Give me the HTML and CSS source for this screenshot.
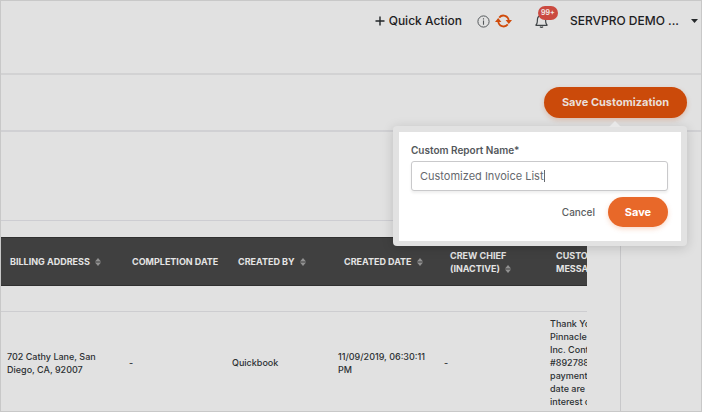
FILE: index.html
```html
<!DOCTYPE html>
<html lang="en">
<head>
<meta charset="utf-8">
<title>Invoice List</title>
<link rel="stylesheet" href="styles.css">
</head>
<body>
<div class="app">
  <header class="topbar">
    <button class="quick-action" type="button">
      <svg width="10" height="10" viewBox="0 0 10 10" aria-hidden="true"><path d="M5 .5v9M.5 5h9" stroke="#222628" stroke-width="1.4" fill="none"/></svg>
      <span>Quick Action</span>
    </button>
    <div class="status">
      <button class="icon-button" type="button" aria-label="Information">
        <svg width="13" height="13" viewBox="0 0 13 13" fill="none" stroke="#54585b"><circle cx="6.5" cy="6.5" r="5.6"/><path d="M6.5 5.5v4.2M6.5 3.2v1.2" stroke-width="1.1"/></svg>
      </button>
      <button class="icon-button" type="button" aria-label="Refresh">
        <svg width="17" height="14" viewBox="0 0 17 14" fill="none" stroke="#d04b0b" stroke-width="1.8"><path d="M4.200 3.600C7.200-.2 13.500 1.400 13.800 7M12.800 10.400C9.800 14.200 3.500 12.600 3.200 7"/><path d="M10.600 6h6.400l-3.200 4zM0 8h6.400L3.200 4z" fill="#d04b0b" stroke="none"/></svg>
      </button>
    </div>
    <button class="icon-button bell" type="button" aria-label="Notifications">
      <svg width="13" height="14" viewBox="0 0 13 14" fill="none" stroke="#3f4447" stroke-width="1.2"><path d="M.6 11.300h11.800c-1.500-.8-1.800-2-1.800-5.500 0-2.500-1.800-4.100-4.100-4.100S2.400 3.300 2.400 5.800c0 3.500-.3 4.700-1.800 5.500zM6.500 0v1.700M5 12.600c.7 1 2.300 1 3 0"/></svg>
      <span class="badge">99+</span>
    </button>
    <button class="account" type="button">
      <span>SERVPRO DEMO ...</span>
      <svg width="7" height="4" viewBox="0 0 7 4" aria-hidden="true"><path d="M0 0h7L3.500 4z" fill="#26292b"/></svg>
    </button>
  </header>

  <div class="toolbar">
    <div class="customize">
      <button class="primary" type="button">Save Customization</button>
      <form class="popover">
        <div class="panel">
          <label for="report-name">Custom Report Name*</label>
          <div class="field">
            <input id="report-name" type="text" value="Customized Invoice List">
            <span class="caret"></span>
          </div>
          <div class="actions">
            <button class="cancel" type="button">Cancel</button>
            <button class="save" type="button">Save</button>
          </div>
        </div>
      </form>
    </div>
  </div>

  <div class="content">
    <main class="report">
      <div class="filters"></div>
      <div class="table-wrap">
        <table>
          <colgroup><col class="c-address"><col class="c-completion"><col class="c-std"><col class="c-std"><col class="c-std"><col class="c-std"></colgroup>
          <thead>
            <tr>
              <th class="tight">BILLING ADDRESS <svg class="sort" viewBox="0 0 6 8"><path d="M0 3.500 3 0l3 3.500zM0 4.500h6L3 8z"/></svg></th>
              <th class="tight">COMPLETION DATE</th>
              <th>CREATED BY <svg class="sort" viewBox="0 0 6 8"><path d="M0 3.500 3 0l3 3.500zM0 4.500h6L3 8z"/></svg></th>
              <th>CREATED DATE <svg class="sort" viewBox="0 0 6 8"><path d="M0 3.500 3 0l3 3.500zM0 4.500h6L3 8z"/></svg></th>
              <th>CREW CHIEF<br>(INACTIVE) <svg class="sort" viewBox="0 0 6 8"><path d="M0 3.500 3 0l3 3.500zM0 4.500h6L3 8z"/></svg></th>
              <th>CUSTO<br>MESSA</th>
            </tr>
          </thead>
          <tbody>
            <tr class="spacer"><td colspan="6"></td></tr>
            <tr>
              <td>702 Cathy Lane, San<br>Diego, CA, 92007</td>
              <td>-</td>
              <td>Quickbook</td>
              <td>11/09/2019, 06:30:11<br>PM</td>
              <td>-</td>
              <td>Thank Yo<br>Pinnacle<br>Inc. Cont<br>#892788<br>payment<br>date are<br>interest o</td>
            </tr>
          </tbody>
        </table>
      </div>
    </main>
    <aside class="side"></aside>
  </div>
</div>
</body>
</html>
```
FILE: styles.css
```css
* { box-sizing: border-box; }

body {
  margin: 0;
  background: #e1e1e1;
  color: #2c3033;
  font-family: Inter, "Open Sans", sans-serif;
  font-size: 9px;
  line-height: 13px;
}

button {
  margin: 0;
  padding: 0;
  border: 0;
  background: none;
  color: inherit;
  font: inherit;
  white-space: nowrap;
}

svg { display: block; flex: none; }

.app {
  display: flex;
  flex-direction: column;
  height: 100vh;
  overflow: hidden;
  border: 1px solid #c8c8c8;
}

.topbar {
  display: flex;
  flex: none;
  align-items: flex-start;
  justify-content: flex-end;
  height: 74px;
  padding: 12px 3px 0 16px;
  border-bottom: 2px solid #d2d2d3;
  color: #1d2022;
  font-size: 12px;
  font-weight: 500;
  line-height: 16px;
}

.topbar button { display: flex; align-items: center; height: 16px; }
.quick-action { gap: 4px; }
.status { display: flex; gap: 5px; margin-left: 15px; }
.topbar .bell { position: relative; margin: 0 22px 0 23px; }

.badge {
  position: absolute;
  top: -7px;
  left: 3px;
  padding: 0 3px;
  border-radius: 7px;
  background: #cb4a40;
  color: #f0e4e3;
  font-size: 7px;
  font-weight: 700;
  line-height: 14px;
}

.account { gap: 12px; }

.toolbar {
  display: flex;
  flex: none;
  justify-content: flex-end;
  height: 57px;
  padding: 12px 14px 0;
  border-bottom: 2px solid #d0d0d3;
}

.customize { position: relative; }

.primary, .save {
  border-radius: 16px;
  color: #fff;
  font-size: 11px;
  font-weight: 700;
}

.primary {
  height: 31px;
  padding: 0 18px;
  background: #cb4a0a;
  color: #eadfd9;
  box-shadow: 0 2px 5px #cb4a0a40;
}

.popover {
  position: absolute;
  z-index: 1;
  top: 39px;
  right: 0;
  width: 294px;
  padding: 6px 6px 5px;
  border-radius: 4px;
  background: #e2e2e2;
  box-shadow: 0 2px 12px #00000028;
}

.popover::before {
  content: "";
  position: absolute;
  top: -5px;
  right: 66px;
  border: 6px solid transparent;
  border-top: 0;
  border-bottom-color: #e8e8e8;
}

.panel { padding: 11px 13px 14px 12px; background: #fff; }

.panel label {
  display: block;
  color: #53575b;
  font-size: 10px;
  font-weight: 600;
  line-height: 14px;
}

.field { position: relative; margin: 4px 0 6px; }

.field input {
  display: block;
  width: 100%;
  height: 30px;
  padding: 0 8px;
  border: 1px solid #c9c9cb;
  border-radius: 3px;
  background: #fff;
  box-shadow: 0 2px 3px #00000012;
  color: #66696e;
  font: 11px/16px Inter, "Open Sans", sans-serif;
}

.caret {
  position: absolute;
  top: 9px;
  left: 133px;
  width: 1px;
  height: 12px;
  background: #66696e;
}

.actions { display: flex; justify-content: flex-end; gap: 13px; }
.cancel { color: #5a5d61; font-size: 10px; font-weight: 500; }

.save {
  width: 60px;
  height: 30px;
  background: #e86829;
  box-shadow: 0 2px 5px #e8682940;
}

.content { display: flex; flex: 1; min-height: 0; }

.report { flex: 1; min-width: 0; }
.side { flex: none; width: 81px; border-left: 1px solid #c8c8ca; }

.filters {
  height: 89px;
  margin-bottom: 16px;
  border-bottom: 1px solid #cdcdd2;
}

.table-wrap { margin-right: 33px; overflow: hidden; }

table {
  width: 649px;
  border-collapse: separate;
  border-spacing: 0;
  table-layout: fixed;
}

.c-address { width: 122px; }
.c-completion { width: 103px; }
.c-std { width: 106px; }

th {
  height: 49px;
  padding: 0 0 0 12px;
  border-top: 1px solid #303030;
  border-bottom: 1px solid #303030;
  background: #404040;
  color: #e4e4e4;
  font-weight: 700;
  text-align: left;
  white-space: nowrap;
}

th.tight { padding-left: 9px; }

.sort {
  display: inline-block;
  width: 6px;
  height: 8px;
  margin-left: 3px;
  vertical-align: -1px;
  fill: #929292;
}

td { padding: 5px 0 0 6px; font-weight: 500; white-space: nowrap; }
.spacer td { height: 26px; padding: 0; border-bottom: 1px solid #cdcdd0; }
```
